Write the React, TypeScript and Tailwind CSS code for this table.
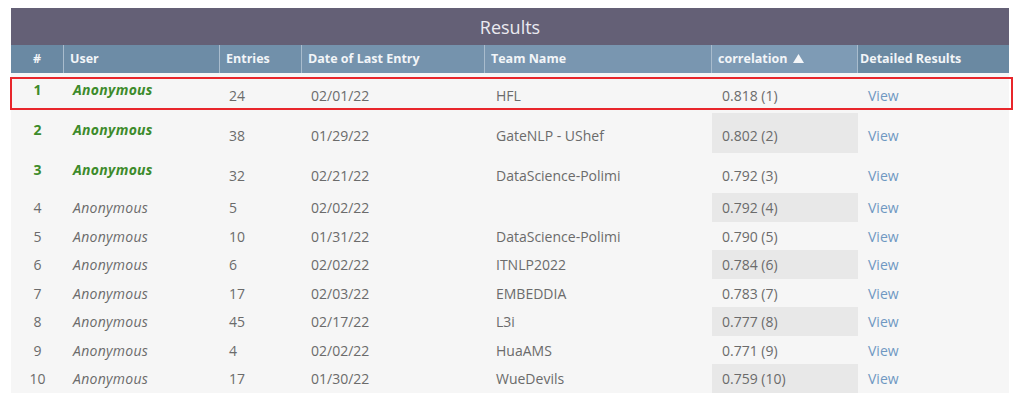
import React from "react";

type Row = {
  rank: number;
  entries: number;
  date: string;
  team: string;
  score: string;
};

const rows: Row[] = [
  { rank: 1, entries: 24, date: "02/01/22", team: "HFL", score: "0.818 (1)" },
  { rank: 2, entries: 38, date: "01/29/22", team: "GateNLP - UShef", score: "0.802 (2)" },
  { rank: 3, entries: 32, date: "02/21/22", team: "DataScience-Polimi", score: "0.792 (3)" },
  { rank: 4, entries: 5, date: "02/02/22", team: "", score: "0.792 (4)" },
  { rank: 5, entries: 10, date: "01/31/22", team: "DataScience-Polimi", score: "0.790 (5)" },
  { rank: 6, entries: 6, date: "02/02/22", team: "ITNLP2022", score: "0.784 (6)" },
  { rank: 7, entries: 17, date: "02/03/22", team: "EMBEDDIA", score: "0.783 (7)" },
  { rank: 8, entries: 45, date: "02/17/22", team: "L3i", score: "0.777 (8)" },
  { rank: 9, entries: 4, date: "02/02/22", team: "HuaAMS", score: "0.771 (9)" },
  { rank: 10, entries: 17, date: "01/30/22", team: "WueDevils", score: "0.759 (10)" },
];

const cols = "grid grid-cols-[53px_156px_82px_183px_227px_146px_151px]";

const App = () => {
  return (
    <div className="w-[1024px] h-[394px] bg-white pt-2 pl-[11px] font-['Open_Sans','Noto_Sans',sans-serif]">
      <div className="relative w-[998px]">
        {/* title */}
        <div className="h-[37px] bg-[#646076] flex items-center justify-center pt-[1px] text-[18px] text-[#ebeaf0]">
          Results
        </div>

        {/* header */}
        <div className={`${cols} h-[28px] text-[12.5px] font-bold text-[#f2f5f8]`}>
          <div className="bg-[#6a89a3] border-r border-[#a9bccd] flex items-center justify-center">#</div>
          <div className="bg-[#6d8ca6] border-r border-[#a9bccd] flex items-center pl-[6px]">User</div>
          <div className="bg-[#7190aa] border-r border-[#a9bccd] flex items-center pl-[6px]">Entries</div>
          <div className="bg-[#7593ad] border-r border-[#a9bccd] flex items-center pl-[6px]">Date of Last Entry</div>
          <div className="bg-[#7996b0] border-r border-[#a9bccd] flex items-center pl-[6px]">Team Name</div>
          <div className="bg-[#7e9bb5] border-r border-[#a9bccd] flex items-center pl-[6px] gap-[6px]">
            correlation
            <svg width="11" height="9" viewBox="0 0 11 9" className="mb-[1px]">
              <path d="M5.5 0 L11 9 L0 9 Z" fill="#f4f6f9" />
            </svg>
          </div>
          <div className="bg-[#6a89a2] flex items-center pl-[2px]">Detailed Results</div>
        </div>

        {/* body */}
        <div className="bg-[#f6f6f6] text-[14px] text-[#6b6b6b]">
          {rows.map((r, i) => {
            const top = r.rank <= 3;
            const shade = i % 2 === 1;
            return (
              <div
                key={r.rank}
                className={`${cols} ${top ? "h-[40px]" : "h-[28.5px]"}`}
              >
                <div
                  className={`flex justify-center ${
                    top ? "pt-[6px] font-bold text-[#3d8b2b]" : "items-center pt-[1px]"
                  }`}
                >
                  {r.rank}
                </div>
                <div
                  className={`italic pl-[9px] flex tracking-[0.3px] ${
                    top ? "pt-[6px] font-bold text-[#3d8b2b]" : "items-center pt-[1px]"
                  }`}
                >
                  Anonymous
                </div>
                <div className={`pl-[9px] flex items-center ${top ? "pt-[4px]" : "pt-[1px]"}`}>{r.entries}</div>
                <div className={`pl-[9px] flex items-center ${top ? "pt-[4px]" : "pt-[1px]"}`}>{r.date}</div>
                <div className={`pl-[11px] flex items-center ${top ? "pt-[4px]" : "pt-[1px]"}`}>{r.team}</div>
                <div
                  className={`pl-[10px] flex items-center ${top ? "pt-[4px]" : "pt-[1px]"} ${
                    shade ? "bg-[#e8e8e8]" : ""
                  }`}
                >
                  {r.score}
                </div>
                <div className={`pl-[10px] flex items-center ${top ? "pt-[4px]" : "pt-[1px]"}`}>
                  <a className="text-[#6f98c2]">View</a>
                </div>
              </div>
            );
          })}
        </div>

        {/* highlight box */}
        <div className="absolute left-[-1px] top-[69px] w-[1003px] h-[33px] border-2 border-[#e8262b] pointer-events-none" />
      </div>
    </div>
  );
};

export default App;
